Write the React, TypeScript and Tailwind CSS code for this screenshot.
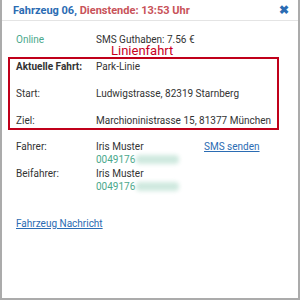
import React from 'react';

const Phone: React.FC = () => (
    <div className="flex items-center text-[#4aa88c]">
        <span>0049176</span>
        <span className="ml-[1px] h-[9px] w-[43px] rounded-sm bg-[#cfe9df] blur-[2px]"></span>
    </div>
);

const App: React.FC = () => {
    return (
        <div className="w-[300px] h-[300px] bg-white border-x-2 border-b-2 border-[#ababab] font-['Roboto',sans-serif] text-[10px] text-[#333] flex flex-col">
            {/* Header */}
            <div className="flex items-center justify-between h-[21px] pl-[11px] pr-[9px] border-b border-[#e4e4e4]">
                <h3 className="text-[11px] font-bold leading-none">
                    <span className="text-[#2b6cb3]">Fahrzeug 06, </span>
                    <span className="text-[#c85259]">Dienstende: 13:53 Uhr</span>
                </h3>
                <span className="text-[#2b6cb3] text-[12px] font-bold leading-none">✖</span>
            </div>

            {/* Status */}
            <div className="flex mt-[13px] px-[14px] leading-[11px]">
                <span className="w-[80px] text-[#4aa88c]">Online</span>
                <span>SMS Guthaben: 7.56 €</span>
            </div>

            <div className="relative mt-[12px] ml-[6px] w-[271px]">
                <span className="absolute -top-[12px] left-[103px] text-[#c8001e] text-[13px] leading-[12px]">Linienfahrt</span>
                <div className="border-2 border-[#c0001a] px-[6px] pt-[1px] pb-[1px] flex flex-col gap-[14px] leading-[13px]">
                    <div className="flex">
                        <span className="w-[80px] font-bold">Aktuelle Fahrt:</span>
                        <span>Park-Linie</span>
                    </div>
                    <div className="flex">
                        <span className="w-[80px]">Start:</span>
                        <span>Ludwigstrasse, 82319 Starnberg</span>
                    </div>
                    <div className="flex">
                        <span className="w-[80px]">Ziel:</span>
                        <span>Marchioninistrasse 15, 81377 München</span>
                    </div>
                </div>
            </div>

            {/* Crew */}
            <div className="mt-[10px] px-[14px] flex flex-col gap-[1px] leading-[13px]">
                <div className="flex">
                    <span className="w-[80px]">Fahrer:</span>
                    <div className="w-[108px]">
                        <div>Iris Muster</div>
                        <Phone />
                    </div>
                    <a className="text-[#2b6cb3] underline">SMS senden</a>
                </div>
                <div className="flex">
                    <span className="w-[80px]">Beifahrer:</span>
                    <div>
                        <div>Iris Muster</div>
                        <Phone />
                    </div>
                </div>
            </div>

            <div className="mt-[24px] px-[14px] leading-[13px]">
                <a className="text-[#2b6cb3] underline">Fahrzeug Nachricht</a>
            </div>
        </div>
    );
};

export default App;
